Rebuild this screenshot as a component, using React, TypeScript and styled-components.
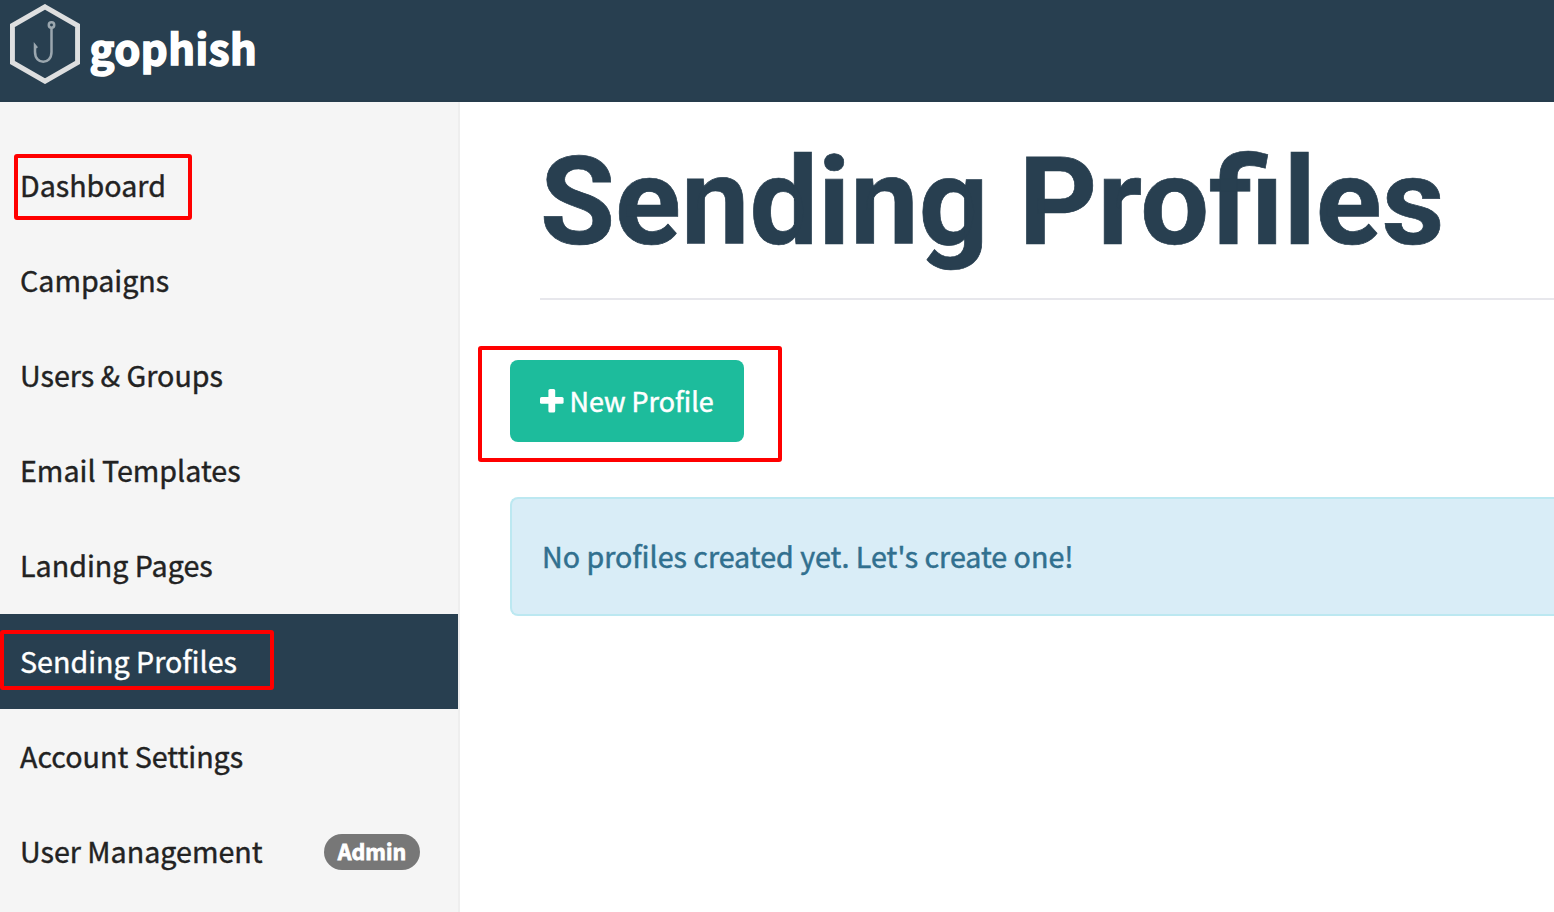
import React from "react";
import styled, { createGlobalStyle } from "styled-components";

const GlobalStyle = createGlobalStyle`
  *, *::before, *::after { box-sizing: border-box; }
  html, body { margin: 0; height: 100%; overflow: hidden; background: #fff; }
  body { font-family: "Noto Sans CJK SC", "Source Sans Pro", sans-serif; color: #222; }
`;

const Page = styled.div`
  width: 100%;
  height: 912px;
  display: flex;
  flex-direction: column;
  overflow: hidden;
`;

const Header = styled.header`
  height: 102px;
  flex: none;
  display: flex;
  align-items: flex-start;
  padding: 4px 0 0 10px;
  background: #283f50;
  border-bottom: 2px solid #263c4c;
`;

const Brand = styled.span`
  margin: 12px 0 0 9.5px;
  font-size: 41.8px;
  line-height: 62px;
  font-weight: 700;
  letter-spacing: 0.5px;
  color: #fff;
  -webkit-text-stroke: 1.6px currentColor;
`;

const Body = styled.div`
  flex: 1;
  display: flex;
  min-height: 0;
`;

const Sidebar = styled.nav`
  width: 460px;
  flex: none;
  padding-top: 36px;
  background: #f5f5f5;
  border-right: 2px solid #eee;
`;

const NavItem = styled.a<{ $active?: boolean }>`
  display: flex;
  align-items: center;
  justify-content: space-between;
  height: 95.2px;
  padding: 0 38px 0 20px;
  font-size: 28.65px;
  line-height: 40px;
  white-space: nowrap;
  color: ${(p) => (p.$active ? "#fff" : "#222")};
  background: ${(p) => (p.$active ? "#283f50" : "transparent")};
  -webkit-text-stroke: 0.4px currentColor;
`;

const Marked = styled.span`
  position: relative;
  margin-bottom: 2px;
`;

const Outline = styled.span<{ $top: number; $left: number; $width: number; $height: number }>`
  position: absolute;
  top: ${(p) => p.$top}px;
  left: ${(p) => p.$left}px;
  width: ${(p) => p.$width}px;
  height: ${(p) => p.$height}px;
  border: 4px solid #f00;
  border-radius: 3px;
  pointer-events: none;
`;

const Badge = styled.span`
  width: 96px;
  height: 36px;
  border-radius: 18px;
  background: #777;
  color: #fff;
  font-size: 21.4px;
  line-height: 34px;
  font-weight: 700;
  text-align: center;
  -webkit-text-stroke: 0.8px currentColor;
`;

const Main = styled.main`
  flex: 1;
  min-width: 0;
  padding: 40px 0 0 50px;
`;

const Title = styled.h1`
  margin: 0 0 0 30px;
  height: 158px;
  border-bottom: 2px solid #e7e7ec;
  font-family: Roboto, sans-serif;
  font-size: 122px;
  line-height: 122px;
  font-weight: 700;
  color: #283f50;
  white-space: nowrap;
  -webkit-text-stroke: 0.7px currentColor;
`;

const Actions = styled.div`
  position: relative;
  margin-top: 60px;
  height: 82px;
`;

const NewButton = styled.button`
  display: flex;
  align-items: center;
  gap: 5.5px;
  width: 234px;
  height: 82px;
  padding: 0 30px;
  border: 0;
  border-radius: 8px;
  background: #1dbc9c;
  color: #fff;
  font-family: inherit;
  font-size: 26.9px;
  line-height: 40px;
  white-space: nowrap;
  -webkit-text-stroke: 0.5px currentColor;
`;

const Alert = styled.div`
  display: flex;
  align-items: center;
  margin-top: 55px;
  height: 119px;
  padding: 0 0 2px 30px;
  border: 2px solid #bce8f1;
  border-right: 0;
  border-radius: 8px 0 0 8px;
  background: #d9edf7;
  color: #31708f;
  font-size: 28.63px;
  line-height: 40px;
  white-space: nowrap;
  -webkit-text-stroke: 0.5px currentColor;
`;

const Logo = () => (
  <svg width="70" height="80" viewBox="0 0 70 80" fill="none">
    <path d="M35 2.8 L67.6 21.5 V58.5 L35 77.2 L2.4 58.5 V21.5 Z" stroke="#dedfe0" strokeWidth="5" />
    <g stroke="#9ba7af" strokeWidth="2.5">
      <circle cx="41.5" cy="21" r="2.7" />
      <path d="M41.5 24 V48 C41.5 61 25 61 25 48 V41.5 L27 44" />
    </g>
  </svg>
);

const PlusIcon = () => (
  <svg width="24" height="24" viewBox="0 0 24 24" fill="#fff" stroke="none">
    <rect x="0" y="8" width="23.6" height="6.8" rx="1.6" />
    <rect x="8.4" y="0" width="6.8" height="23.6" rx="1.6" />
  </svg>
);

type Item = { label: string; active?: boolean; badge?: string; outline?: [number, number, number, number] };

const items: Item[] = [
  { label: "Dashboard", outline: [-11, -6, 178, 66] },
  { label: "Campaigns" },
  { label: "Users & Groups" },
  { label: "Email Templates" },
  { label: "Landing Pages" },
  { label: "Sending Profiles", active: true, outline: [-11, -20, 274, 60] },
  { label: "Account Settings" },
  { label: "User Management", badge: "Admin" },
];

export default function App() {
  return (
    <Page>
      <GlobalStyle />
      <Header>
        <Logo />
        <Brand>gophish</Brand>
      </Header>
      <Body>
        <Sidebar>
          {items.map(({ label, active, badge, outline }) => (
            <NavItem key={label} $active={active}>
              <Marked>
                {label}
                {outline && (
                  <Outline $top={outline[0]} $left={outline[1]} $width={outline[2]} $height={outline[3]} />
                )}
              </Marked>
              {badge && <Badge>{badge}</Badge>}
            </NavItem>
          ))}
        </Sidebar>
        <Main>
          <Title>Sending Profiles</Title>
          <Actions>
            <NewButton>
              <PlusIcon />
              New Profile
            </NewButton>
            <Outline $top={-14} $left={-32} $width={304} $height={116} />
          </Actions>
          <Alert>No profiles created yet. Let's create one!</Alert>
        </Main>
      </Body>
    </Page>
  );
}
